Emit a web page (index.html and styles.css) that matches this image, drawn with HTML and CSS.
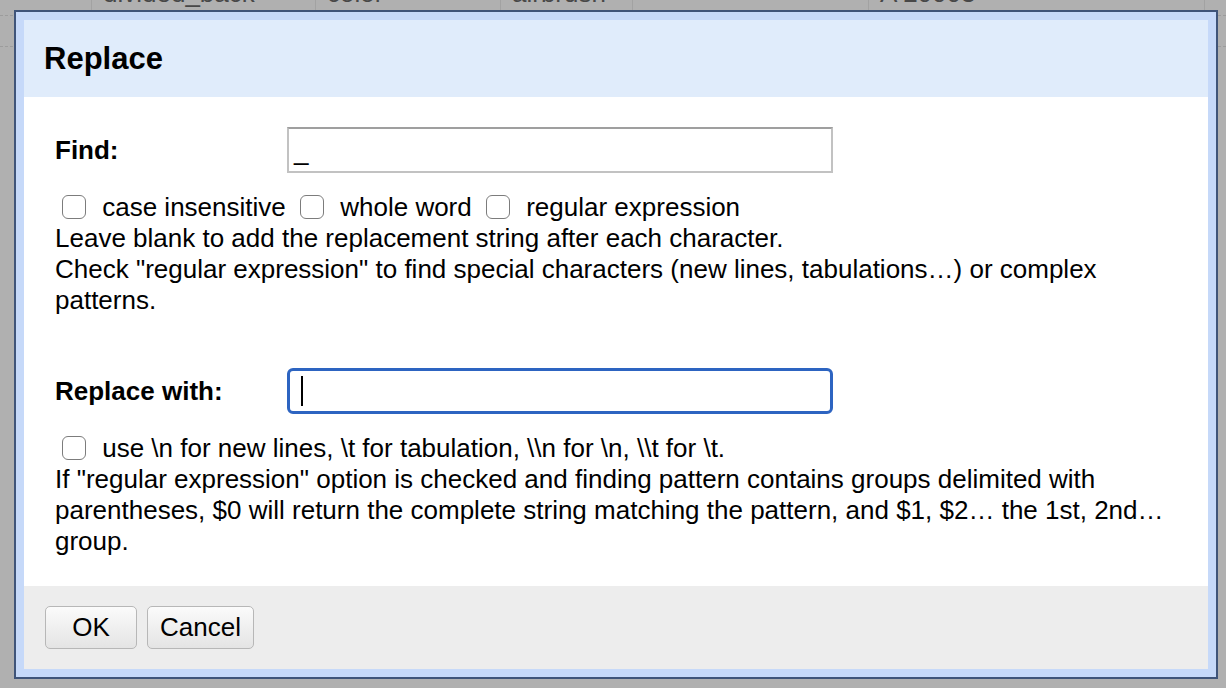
FILE: index.html
```html
<!DOCTYPE html>
<html lang="en">
<head>
  <meta charset="UTF-8">
  <meta name="viewport" content="width=device-width, initial-scale=1.0">
  <title>Replace</title>
  <link rel="stylesheet" href="styles.css">
</head>
<body>

  <div class="grid">
    <div class="grid-row first">
      <div class="cell c1"></div>
      <div class="cell c2"><span>divided_back</span></div>
      <div class="cell c3"><span>color</span></div>
      <div class="cell c4"><span>airbrush</span></div>
      <div class="cell c5"></div>
      <div class="cell c6"><span>A 20003</span></div>
      <div class="cell c7"></div>
    </div>
    <div class="grid-row"></div>
  </div>

  <div class="dialog">
    <div class="dialog-header">
      <h1>Replace</h1>
    </div>

    <div class="dialog-body">
      <div class="field-row">
        <label class="field-label">Find:</label>
        <div class="field">_</div>
      </div>
      <div class="options">
        <div>
          <label class="check"><input type="checkbox"> case insensitive</label>
          <label class="check"><input type="checkbox"> whole word</label>
          <label class="check"><input type="checkbox"> regular expression</label>
        </div>
        <div>Leave blank to add the replacement string after each character.</div>
        <div>Check "regular expression" to find special characters (new lines, tabulations…) or complex patterns.</div>
      </div>

      <div class="field-row spaced">
        <label class="field-label">Replace with:</label>
        <div class="field focused"><span class="caret"></span></div>
      </div>
      <div class="options">
        <div>
          <label class="check"><input type="checkbox"> use \n for new lines, \t for tabulation, \\n for \n, \\t for \t.</label>
        </div>
        <div>If "regular expression" option is checked and finding pattern contains groups delimited with parentheses, $0 will return the complete string matching the pattern, and $1, $2… the 1st, 2nd… group.</div>
      </div>
    </div>

    <div class="dialog-footer">
      <button class="btn ok">OK</button>
      <button class="btn">Cancel</button>
    </div>
  </div>

</body>
</html>
```

FILE: styles.css
```css
body {
  margin: 0;
  background: #b0b0b0;
  font-family: "Liberation Sans", Arial, Helvetica, sans-serif;
  font-size: 26px;
  color: #000;
  height: 688px;
  overflow: hidden;
}

/* page behind the overlay */
.grid-row {
  display: flex;
  height: 30px;
  border-bottom: 1px dashed #9c9c9c;
}

.grid-row.first {
  height: 15px;
  overflow: hidden;
}

.cell {
  border-left: 1px solid #a2a2a2;
  color: #484848;
  padding-left: 11px;
  box-sizing: border-box;
  line-height: 30px;
}

.cell span {
  display: block;
  margin-top: -22px;
}

.c1 { width: 91px; border-left: none; }
.c2 { width: 224px; }
.c3 { width: 185px; }
.c4 { width: 132px; }
.c5 { width: 236px; }
.c6 { width: 336px; }
.c7 { flex: 1; }

/* dialog */
.dialog {
  position: absolute;
  left: 14px;
  top: 10px;
  width: 1204px;
  box-sizing: border-box;
  border: 2px solid #3f5479;
  background: #c6d9f9;
  padding: 8px;
}

.dialog-header {
  background: #e0ecfb;
  height: 77px;
  display: flex;
  align-items: center;
  padding-left: 20px;
}

.dialog-header h1 {
  margin: 0;
  font-size: 31px;
  font-weight: bold;
}

.dialog-body {
  background: #fff;
  padding: 30px 20px 29px 31px;
}

.field-row {
  display: flex;
  align-items: center;
}

.field-row.spaced {
  margin-top: 52px;
}

.field-label {
  width: 232px;
  font-weight: bold;
}

.field {
  width: 546px;
  height: 46px;
  box-sizing: border-box;
  border: 2px solid #c2c2c2;
  border-top-color: #9f9f9f;
  padding-left: 5px;
  line-height: 44px;
}

.field.focused {
  border: 3px solid #2d64c1;
  border-radius: 6px;
  padding-left: 11px;
  display: flex;
  align-items: center;
}

.caret {
  width: 2px;
  height: 30px;
  background: #000;
}

.options {
  margin-top: 19px;
  line-height: 31px;
}

.check {
  white-space: nowrap;
}

.check input {
  appearance: none;
  -webkit-appearance: none;
  width: 24px;
  height: 24px;
  margin: 0 9px 0 7px;
  border: 1.5px solid #7c7c7c;
  border-radius: 6px;
  background: #fff;
  vertical-align: -3px;
}

.dialog-footer {
  background: #ededed;
  padding: 20px 21px;
  display: flex;
  gap: 10px;
}

.btn {
  font-family: "Liberation Sans", Arial, Helvetica, sans-serif;
  font-size: 26px;
  color: #000;
  height: 43px;
  padding: 0 12px;
  background: linear-gradient(#fbfbfb, #e4e4e4);
  border: 1px solid #b7b7b7;
  border-radius: 5px;
}

.btn.ok {
  width: 92px;
}
```
